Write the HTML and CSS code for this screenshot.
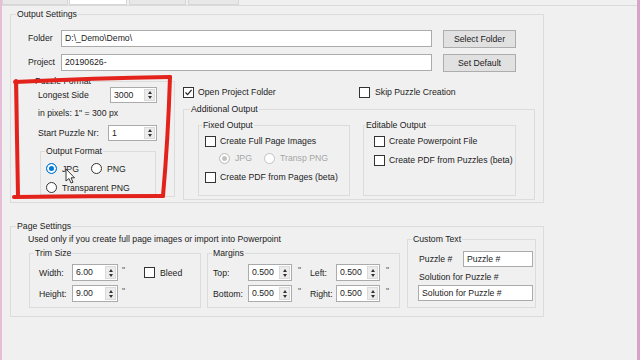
FILE: index.html
```html
<!DOCTYPE html>
<html lang="en">
<head>
    <meta charset="UTF-8">
    <title>Output Settings</title>
    <link rel="stylesheet" href="styles.css">
</head>
<body>

<div class="window">
    <!-- Tab strip (cut off at the top) -->
    <div class="tabs">
        <span class="tab tab-1"></span>
        <span class="tab tab-2"></span>
        <span class="tab tab-3"></span>
        <span class="tab tab-4"></span>
    </div>

    <div class="page">
        <fieldset class="group output-settings">
            <legend>Output Settings</legend>
            <div class="os-body">
                <div class="path-row">
                    <span class="path-label">Folder</span>
                    <span class="textbox path-box">D:\_Demo\Demo\</span>
                    <span class="btn">Select Folder</span>
                </div>
                <div class="path-row">
                    <span class="path-label">Project</span>
                    <span class="textbox path-box">20190626-</span>
                    <span class="btn">Set Default</span>
                </div>

                <div class="os-lower">
                    <!-- Puzzle format -->
                    <fieldset class="group puzzle">
                        <legend>Puzzle Format</legend>
                        <div class="puzzle-body">
                            <div class="field-row pz-row">
                                <span class="pz-label-1">Longest Side</span>
                                <div class="spin pz-spin-1">
                                    <span class="spin-val">3000</span>
                                    <span class="spin-btns"><i class="up"></i><i class="down"></i></span>
                                </div>
                            </div>
                            <div class="pz-note">in pixels: 1" = 300 px</div>
                            <div class="field-row pz-row pz-row-2">
                                <span class="pz-label-2">Start Puzzle Nr:</span>
                                <div class="spin pz-spin-2">
                                    <span class="spin-val">1</span>
                                    <span class="spin-btns"><i class="up"></i><i class="down"></i></span>
                                </div>
                            </div>

                            <fieldset class="group out-format">
                                <legend>Output Format</legend>
                                <div class="of-body">
                                    <div class="radio-row">
                                        <label class="opt opt-jpg"><span class="rb on"></span>JPG</label>
                                        <label class="opt"><span class="rb"></span>PNG</label>
                                    </div>
                                    <div class="radio-row radio-row-2">
                                        <label class="opt"><span class="rb"></span>Transparent PNG</label>
                                    </div>
                                </div>
                            </fieldset>
                        </div>
                    </fieldset>

                    <!-- Right side options -->
                    <div class="right-col">
                        <div class="check-row">
                            <label class="opt opt-open"><span class="cb checked"><svg viewBox="0 0 9 9"><path d="M1.5 4.5 L3.6 6.7 L7.6 1.8" /></svg></span>Open Project Folder</label>
                            <label class="opt"><span class="cb"></span>Skip Puzzle Creation</label>
                        </div>

                        <fieldset class="group additional">
                            <legend>Additional Output</legend>
                            <div class="add-body">
                                <fieldset class="group fixed">
                                    <legend>Fixed Output</legend>
                                    <div class="fixed-body">
                                        <label class="opt check-line"><span class="cb"></span>Create Full Page Images</label>
                                        <div class="check-line dis-row">
                                            <label class="opt opt-dis-jpg"><span class="rb on dis"></span>JPG</label>
                                            <label class="opt"><span class="rb dis"></span>Transp PNG</label>
                                        </div>
                                        <label class="opt check-line pdf-line"><span class="cb"></span>Create PDF from Pages (beta)</label>
                                    </div>
                                </fieldset>
                                <fieldset class="group editable">
                                    <legend>Editable Output</legend>
                                    <div class="edit-body">
                                        <label class="opt check-line"><span class="cb"></span>Create Powerpoint File</label>
                                        <label class="opt check-line edit-line-2"><span class="cb"></span>Create PDF from Puzzles (beta)</label>
                                    </div>
                                </fieldset>
                            </div>
                        </fieldset>
                    </div>
                </div>
            </div>
        </fieldset>

        <fieldset class="group page-settings">
            <legend>Page Settings</legend>
            <div class="ps-body">
                <div class="ps-left">
                    <div class="ps-note">Used only if you create full page images or import into Powerpoint</div>
                    <div class="ps-groups">
                        <fieldset class="group trim">
                            <legend>Trim Size</legend>
                            <div class="trim-body">
                                <div class="dim-row">
                                    <span class="dim-label">Width:</span>
                                    <div class="spin dim-spin">
                                        <span class="spin-val">6.00</span>
                                        <span class="spin-btns"><i class="up"></i><i class="down"></i></span>
                                    </div>
                                    <span class="unit trim-unit">"</span>
                                    <label class="opt"><span class="cb"></span>Bleed</label>
                                </div>
                                <div class="dim-row dim-row-2">
                                    <span class="dim-label">Height:</span>
                                    <div class="spin dim-spin">
                                        <span class="spin-val">9.00</span>
                                        <span class="spin-btns"><i class="up"></i><i class="down"></i></span>
                                    </div>
                                    <span class="unit trim-unit">"</span>
                                </div>
                            </div>
                        </fieldset>

                        <fieldset class="group margins">
                            <legend>Margins</legend>
                            <div class="margins-body">
                                <div class="dim-row">
                                    <span class="m-label">Top:</span>
                                    <div class="spin m-spin">
                                        <span class="spin-val">0.500</span>
                                        <span class="spin-btns"><i class="up"></i><i class="down"></i></span>
                                    </div>
                                    <span class="unit m-unit">"</span>
                                    <span class="m-label-2">Left:</span>
                                    <div class="spin m-spin">
                                        <span class="spin-val">0.500</span>
                                        <span class="spin-btns"><i class="up"></i><i class="down"></i></span>
                                    </div>
                                    <span class="unit m-unit">"</span>
                                </div>
                                <div class="dim-row dim-row-2">
                                    <span class="m-label">Bottom:</span>
                                    <div class="spin m-spin">
                                        <span class="spin-val">0.500</span>
                                        <span class="spin-btns"><i class="up"></i><i class="down"></i></span>
                                    </div>
                                    <span class="unit m-unit">"</span>
                                    <span class="m-label-2">Right:</span>
                                    <div class="spin m-spin">
                                        <span class="spin-val">0.500</span>
                                        <span class="spin-btns"><i class="up"></i><i class="down"></i></span>
                                    </div>
                                    <span class="unit m-unit">"</span>
                                </div>
                            </div>
                        </fieldset>
                    </div>
                </div>

                <fieldset class="group custom">
                    <legend>Custom Text</legend>
                    <div class="custom-body">
                        <div class="field-row custom-row">
                            <span class="custom-label">Puzzle #</span>
                            <span class="textbox custom-box">Puzzle #</span>
                        </div>
                        <div class="sol-label">Solution for Puzzle #</div>
                        <span class="textbox sol-box">Solution for Puzzle #</span>
                    </div>
                </fieldset>
            </div>
        </fieldset>
    </div>

    <!-- Red hand-drawn highlight and mouse pointer on top of the form -->
    <svg class="markup" width="640" height="360" viewBox="0 0 640 360">
        <g fill="none" stroke="#e3221b" stroke-width="4" stroke-linecap="round" stroke-linejoin="round">
            <path d="M15 82 Q95 78 170 77" />
            <path d="M170 77 Q168 140 163 196" />
            <path d="M14 197 Q90 196 163 196" />
            <path d="M16 81 Q17 140 18 196" />
        </g>
        <path d="M66 169 L66 181 L69 178.5 L71 183 L73 182.2 L71 177.8 L74.5 177.8 Z" fill="#fff" stroke="#222" stroke-width="0.9" stroke-linejoin="round" />
    </svg>
</div>

</body>
</html>
```

FILE: styles.css
```css
/* Reset and general styling */
* {
    box-sizing: border-box;
}

body {
    margin: 0;
    background-color: #f0f0f0;
    font-family: "Liberation Sans", Arial, sans-serif;
    font-size: 8.7px;
    line-height: 10px;
    color: #1c1c1c;
}

.window {
    position: relative;
    width: 640px;
    height: 360px;
    border-left: 2px solid #e6bdd7;
    border-right: 3px solid #d8a3c7;
    overflow: hidden;
}

/* Tab strip */
.tabs {
    display: flex;
    height: 6px;
    border-bottom: 1px solid #dadada;
}

.tab {
    height: 5px;
    border: 1px solid #d6d6d6;
    border-top: none;
    background-color: #e8e8e8;
}

.tab-1 { width: 66px; }
.tab-2 { width: 58px; margin-left: 1px; background-color: #fff; }
.tab-3 { width: 57px; margin-left: 2px; }
.tab-4 { width: 51px; margin-left: 2px; }

.page {
    padding-left: 8px;
}

/* Group boxes */
.group {
    margin: 0;
    padding: 0;
    min-width: 0;
    border: 1px solid #dcdcdc;
}

.group > legend {
    padding: 0 1px;
    margin-left: 5px;
    line-height: 10px;
}

.output-settings {
    margin-top: 3px;
    width: 534px;
    height: 194px;
}

.os-body {
    padding: 11px 0 0 17px;
}

.path-row {
    display: flex;
    align-items: flex-start;
    height: 18px;
}

.path-row + .path-row {
    margin-top: 6px;
}

.path-label {
    width: 33px;
    line-height: 17px;
}

.textbox {
    display: block;
    height: 17px;
    padding-left: 3px;
    line-height: 15px;
    background-color: #fff;
    border: 1px solid #ababab;
    white-space: nowrap;
}

.path-box {
    width: 371px;
}

.btn {
    margin-left: 11px;
    width: 73px;
    height: 18px;
    line-height: 16px;
    text-align: center;
    background-color: #e1e1e1;
    border: 1px solid #adadad;
}

.os-lower {
    display: flex;
    align-items: flex-start;
    margin-left: -10px;
}

/* Puzzle format */
.puzzle {
    margin-top: 4px;
    width: 157px;
    height: 121px;
}

.puzzle > legend {
    margin-left: 15px;
}

.puzzle-body {
    padding: 1px 0 0 19px;
}

.field-row {
    display: flex;
    align-items: center;
}

.pz-row {
    height: 16px;
}

.pz-label-1 { width: 72px; }
.pz-label-2 { width: 70px; }

.pz-note {
    margin-top: 5px;
}

.pz-row-2 {
    margin-top: 7px;
}

/* Spin boxes */
.spin {
    display: flex;
    height: 16px;
    background-color: #fff;
    border: 1px solid #ababab;
}

.spin-val {
    flex: 1;
    padding-left: 3px;
    line-height: 14px;
}

.spin-btns {
    width: 11px;
    margin: 1px;
    display: flex;
    flex-direction: column;
    align-items: center;
    justify-content: center;
    gap: 2px;
    background-color: #ececec;
    border: 1px solid #dadada;
}

.spin-btns i {
    width: 0;
    height: 0;
    border-left: 2.5px solid transparent;
    border-right: 2.5px solid transparent;
}

.spin-btns .up { border-bottom: 3px solid #333; }
.spin-btns .down { border-top: 3px solid #333; }

.pz-spin-1 { width: 47px; }
.pz-spin-2 { width: 49px; height: 16px; }

.out-format {
    margin: 5px 0 0 2px;
    width: 116px;
    height: 49px;
}

.out-format > legend {
    margin-left: 4px;
}

.of-body {
    padding: 6px 0 0 5px;
}

.radio-row {
    display: flex;
    height: 13px;
    align-items: center;
}

.radio-row-2 {
    margin-top: 6px;
}

/* Options: checkboxes and radios with their text */
.opt {
    display: flex;
    align-items: center;
    gap: 5px;
    white-space: nowrap;
}

.opt-jpg { width: 45px; }

.cb {
    flex: none;
    width: 11px;
    height: 11px;
    background-color: #fff;
    border: 1px solid #333;
}

.cb svg {
    display: block;
    width: 9px;
    height: 9px;
    fill: none;
    stroke: #222;
    stroke-width: 1.2;
}

.rb {
    flex: none;
    width: 11px;
    height: 11px;
    border-radius: 50%;
    background-color: #fff;
    border: 1px solid #333;
}

.rb.on {
    border-color: #0078d7;
    background-color: #0078d7;
    box-shadow: inset 0 0 0 2px #fff;
}

.rb.dis {
    border-color: #c2c2c2;
    background-color: #fff;
}

.rb.on.dis {
    background-color: #c2c2c2;
}

/* Right column */
.right-col {
    margin-left: 8px;
    width: 352px;
}

.check-row {
    display: flex;
    height: 12px;
    margin-top: 14px;
}

.opt-open { width: 176px; gap: 4px; }

.additional {
    margin-top: 6px;
    width: 352px;
    height: 96px;
}

.additional > legend {
    margin-left: 6px;
}

.add-body {
    display: flex;
    gap: 13px;
    padding: 6px 0 0 14px;
}

.fixed {
    width: 152px;
    height: 76px;
}

.fixed > legend { margin-left: 3px; }

.editable {
    width: 153px;
    height: 76px;
}

.editable > legend { margin-left: 1px; }

.fixed-body {
    padding: 5px 0 0 6px;
}

.edit-body {
    padding: 5px 0 0 10px;
}

.check-line {
    height: 12px;
    gap: 4px;
}

.dis-row {
    display: flex;
    align-items: center;
    margin: 5px 0 0 14px;
    color: #a6a6a6;
}

.opt-dis-jpg { width: 41px; }

.pdf-line { margin-top: 7px; }
.edit-line-2 { margin-top: 7px; }

/* Page settings */
.page-settings {
    margin-top: 18px;
    width: 534px;
    height: 96px;
}

.ps-body {
    display: flex;
    align-items: flex-start;
    padding: 3px 0 0 17px;
}

.ps-left {
    width: 372px;
}

.ps-groups {
    display: flex;
    gap: 6px;
    margin: 4px 0 0 1px;
}

.trim {
    width: 172px;
    height: 60px;
}

.trim > legend,
.margins > legend,
.custom > legend {
    margin-left: 4px;
}

.trim-body {
    padding: 6px 0 0 9px;
}

.dim-row {
    display: flex;
    align-items: center;
    height: 17px;
}

.dim-row-2 {
    margin-top: 4px;
}

.dim-row .spin {
    height: 17px;
}

.dim-row .spin-val {
    line-height: 15px;
}

.dim-label { width: 33px; }
.dim-spin { width: 46px; }

.unit {
    align-self: flex-start;
    line-height: 12px;
    color: #555;
}

.trim-unit {
    width: 26px;
    padding-left: 4px;
}

.margins {
    width: 193px;
    height: 60px;
}

.margins-body {
    padding: 6px 0 0 5px;
}

.m-label { width: 35px; }
.m-label-2 { width: 26px; }
.m-spin { width: 44px; }

.m-unit {
    width: 18px;
    padding-left: 6px;
}

.custom {
    margin-left: 7px;
    width: 129px;
    height: 74px;
}

.custom-body {
    padding: 7px 0 0 11px;
}

.custom-row {
    height: 16px;
}

.custom-label { width: 44px; }

.custom-box {
    width: 70px;
    height: 16px;
    line-height: 14px;
}

.sol-label {
    margin-top: 5px;
}

.sol-box {
    margin: 3px 0 0 -1px;
    width: 115px;
    height: 16px;
    line-height: 14px;
}

/* Overlay drawn on top of the form */
.markup {
    position: absolute;
    top: 0;
    left: -2px;
    pointer-events: none;
}
```
